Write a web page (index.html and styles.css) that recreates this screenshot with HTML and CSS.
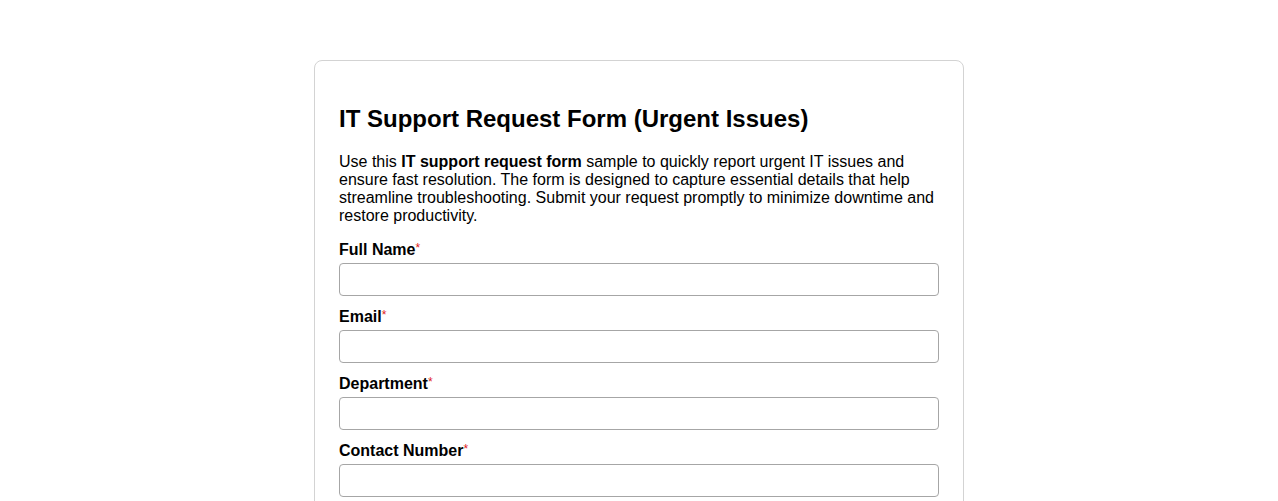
FILE: index.html
```html
<!DOCTYPE html>
<html lang="en">
<head>
<meta charset="utf-8">
<title>IT Support Request Form</title>
<link rel="stylesheet" href="styles.css">
</head>
<body>
<div class="page">
  <form class="card">
    <h1 class="title">IT Support Request Form (Urgent Issues)</h1>
    <p class="intro">Use this <strong>IT support request form</strong> sample to quickly report urgent IT issues and ensure fast resolution. The form is designed to capture essential details that help streamline troubleshooting. Submit your request promptly to minimize downtime and restore productivity.</p>
    <div class="field">
      <label class="label" for="name">Full Name<span class="req">*</span></label>
      <input class="input" id="name" type="text">
    </div>
    <div class="field">
      <label class="label" for="email">Email<span class="req">*</span></label>
      <input class="input" id="email" type="email">
    </div>
    <div class="field">
      <label class="label" for="dept">Department<span class="req">*</span></label>
      <input class="input" id="dept" type="text">
    </div>
    <div class="field">
      <label class="label" for="phone">Contact Number<span class="req">*</span></label>
      <input class="input" id="phone" type="tel">
    </div>
  </form>
</div>
</body>
</html>
```
FILE: styles.css
```css
html, body {
  margin: 0;
  padding: 0;
  background: #ffffff;
}
body {
  font-family: "Liberation Sans", Arial, sans-serif;
  color: #000;
}
.page {
  display: flex;
  justify-content: center;
  padding-top: 60px;
}
.card {
  width: 600px;
  border: 1px solid #d3d3d3;
  border-radius: 8px;
  padding: 44px 24px 24px 24px;
}
.title {
  font-size: 24px;
  font-weight: bold;
  line-height: 28px;
  margin: 0 0 20px 0;
}
.intro {
  font-size: 16px;
  line-height: 18px;
  margin: 0 0 16px 0;
}
.field {
  display: flex;
  flex-direction: column;
  margin-bottom: 12px;
}
.label {
  font-size: 16px;
  font-weight: bold;
  line-height: 18px;
  margin-bottom: 4px;
}
.req {
  color: #e02020;
  font-weight: normal;
  font-size: 12px;
  vertical-align: top;
  line-height: 14px;
}
.input {
  box-sizing: border-box;
  width: 600px;
  height: 33px;
  border: 1px solid #a6a6a6;
  border-radius: 4px;
  margin: 0;
  padding: 4px 8px;
  font-family: inherit;
  font-size: 16px;
}
```
